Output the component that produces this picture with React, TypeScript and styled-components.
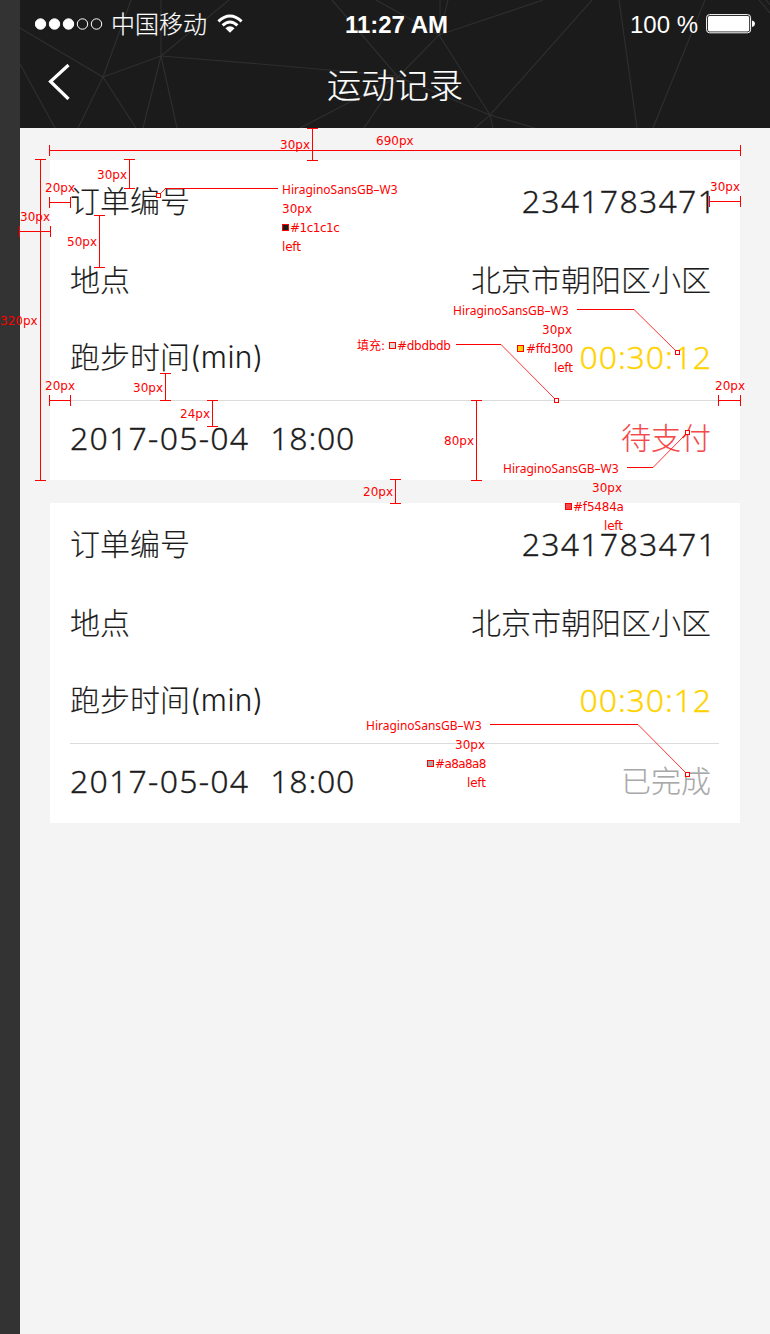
import React from 'react';
import styled, { createGlobalStyle } from 'styled-components';

const GlobalStyle = createGlobalStyle`
  * { box-sizing: border-box; }
  body {
    margin: 0;
    background: #333;
    font-family: "Inter", "Noto Sans CJK SC", sans-serif;
    font-weight: 300;
    color: #1c1c1c;
  }
`;

const Board = styled.div`
  position: relative;
  display: flex;
  width: 770px;
  height: 1334px;
  padding-left: 20px;
  overflow: hidden;
  background: #333;
`;

const Screen = styled.main`
  flex: 1;
  background: #f4f4f4;
`;

const Header = styled.header`
  position: relative;
  height: 128px;
  background: #1b1b1b;
  color: #fff;
`;

const Mesh = styled.svg`
  position: absolute;
  inset: 0;
  fill: none;
  stroke: #2e2e2e;
  stroke-width: 1.2;
`;

const StatusBar = styled.div`
  position: relative;
  display: grid;
  grid-template-columns: 1fr auto 1fr;
  align-items: center;
  height: 48px;
  padding: 0 14px 0 15px;
`;

const StatusSide = styled.div<{ $end?: boolean }>`
  display: flex;
  align-items: center;
  justify-content: ${(p) => (p.$end ? 'flex-end' : 'flex-start')};
`;

const Carrier = styled.span`
  padding-bottom: 2px;
  margin: 0 10px 0 7px;
  font: 300 24px/46px "Noto Sans CJK SC", sans-serif;
  -webkit-text-stroke: 0.15px;
`;

const Clock = styled.span`
  padding: 2px 0 0 2px;
  font: bold 24px/46px "Liberation Sans", Arial, sans-serif;
`;

const BatteryLevel = styled.span`
  padding-top: 2px;
  margin-right: 8px;
  font: 400 24px/46px "Liberation Sans", Arial, sans-serif;
`;

const TitleBar = styled.div`
  position: relative;
  display: grid;
  grid-template-columns: 60px 1fr 60px;
  align-items: center;
  height: 72px;
`;

const BackIcon = styled.svg`
  justify-self: end;
  margin: -4px 10px 0 0;
  fill: none;
  stroke: #fff;
  stroke-width: 3.2;
`;

const Title = styled.h1`
  margin: 0;
  text-align: center;
  font: 300 34px/72px "Noto Sans CJK SC", sans-serif;
  -webkit-text-stroke: 0.2px;
`;

const Orders = styled.section`
  display: flex;
  flex-direction: column;
  gap: 23px;
  padding: 32px 30px 0;
`;

const Card = styled.article`
  display: grid;
  grid-template-rows: 82px 78px 80px 80px;
  height: 320px;
  padding: 0 21px 0 20px;
  background: #fff;
`;

const Row = styled.div<{ $top: number; $line?: boolean }>`
  display: flex;
  justify-content: space-between;
  padding: ${(p) => p.$top}px 8px 0 0;
  border-top: ${(p) => (p.$line ? '1px solid #dbdbdb' : '0')};
  font-size: 30px;
  line-height: 40px;
  white-space: nowrap;
  -webkit-text-stroke: 0.12px;
`;

const Unit = styled.span`
  letter-spacing: 0.4px;
  -webkit-text-stroke: 0;
`;

const Digits = styled.span<{ $color?: string; $spacing: number; $shift?: number }>`
  margin-right: ${(p) => -(p.$shift ?? 0)}px;
  color: ${(p) => p.$color ?? 'inherit'};
  font-family: "Noto Sans", sans-serif;
  font-size: 32px;
  letter-spacing: ${(p) => p.$spacing}px;
  -webkit-text-stroke: 0.3px;
`;

const DateTime = styled.span`
  display: flex;
  gap: 21px;
`;

const Status = styled.span<{ $color: string }>`
  color: ${(p) => p.$color};
`;

const Marks = styled.svg`
  position: absolute;
  inset: 0;
  fill: none;
  stroke: #f00;
  stroke-width: 1;
  pointer-events: none;
`;

const Note = styled.span<{ $x: number; $y: number; $spacing?: number; $name?: boolean }>`
  position: absolute;
  left: ${(p) => p.$x}px;
  top: ${(p) => p.$y - (p.$name ? 7 : 8)}px;
  color: #f00;
  font: 400 12px/16px ${(p) => (p.$name ? '"Noto Sans"' : '"DejaVu Sans"')}, "Noto Sans CJK SC", sans-serif;
  letter-spacing: ${(p) => p.$spacing ?? 0}px;
  white-space: nowrap;
`;

type Measure = { a: number; b: number; at: number; dir: 'h' | 'v' };

const measures: Measure[] = [
  { dir: 'h', a: 49, b: 740, at: 150 },
  { dir: 'v', a: 128, b: 160, at: 312 },
  { dir: 'v', a: 159, b: 188, at: 129 },
  { dir: 'h', a: 49, b: 70, at: 202 },
  { dir: 'h', a: 19, b: 50, at: 231 },
  { dir: 'v', a: 215, b: 267, at: 99 },
  { dir: 'v', a: 159, b: 480, at: 40 },
  { dir: 'h', a: 709, b: 740, at: 201 },
  { dir: 'v', a: 373, b: 400, at: 165 },
  { dir: 'h', a: 49, b: 70, at: 400 },
  { dir: 'v', a: 400, b: 426, at: 212 },
  { dir: 'h', a: 718, b: 740, at: 400 },
  { dir: 'v', a: 400, b: 480, at: 476 },
  { dir: 'v', a: 479, b: 503, at: 395 },
];

const measurePath = ({ a, b, at, dir }: Measure) => {
  const c = at + 0.5;
  return dir === 'h'
    ? `M${a} ${c}H${b + 1}M${a + 0.5} ${at - 5}v11M${b + 0.5} ${at - 5}v11`
    : `M${c} ${a}V${b + 1}M${at - 5} ${a + 0.5}h11M${at - 5} ${b + 0.5}h11`;
};

const leaders = [
  { flat: 'M278 188.5H165', slope: 'M165.5 188.5L160 194', x: 158, y: 195 },
  { flat: 'M577 309.5H634', slope: 'M634 309.5L676 351', x: 677, y: 352 },
  { flat: 'M456 344.5H501', slope: 'M501 344.5L555 399', x: 556, y: 400 },
  { flat: 'M627 467.5H653', slope: 'M653 467.5L686 434', x: 687, y: 432 },
  { flat: 'M490 724.5H638', slope: 'M638 724.5L686 773', x: 687, y: 774 },
];

const swatches = [
  { x: 282, y: 224, color: '#1c1c1c' },
  { x: 517, y: 345, color: '#ffd300' },
  { x: 389, y: 342, color: '#dbdbdb' },
  { x: 565, y: 503, color: '#f5484a' },
  { x: 427, y: 760, color: '#a8a8a8' },
];

const notes: { t: string; x: number; y: number; s?: number; name?: boolean }[] = [
  { t: '30px', x: 280, y: 145 },
  { t: '690px', x: 376, y: 141 },
  { t: '30px', x: 97, y: 175 },
  { t: '20px', x: 45, y: 188 },
  { t: '30px', x: 20, y: 217 },
  { t: '50px', x: 67, y: 242 },
  { t: '320px', x: 0, y: 321 },
  { t: '30px', x: 710, y: 187 },
  { t: '30px', x: 133, y: 388 },
  { t: '20px', x: 45, y: 386 },
  { t: '24px', x: 180, y: 414 },
  { t: '20px', x: 715, y: 386 },
  { t: '80px', x: 444, y: 441 },
  { t: '20px', x: 363, y: 492 },
  { t: 'HiraginoSansGB–W3', x: 282, y: 189, name: true },
  { t: '30px', x: 282, y: 209 },
  { t: '#1c1c1c', x: 290, y: 228, s: -0.5 },
  { t: 'left', x: 282, y: 247, s: -0.2 },
  { t: 'HiraginoSansGB–W3', x: 453, y: 310, name: true },
  { t: '30px', x: 542, y: 330 },
  { t: '#ffd300', x: 526, y: 349, s: -0.3 },
  { t: 'left', x: 554, y: 368, s: -0.2 },
  { t: '填充:', x: 357, y: 346 },
  { t: '#dbdbdb', x: 397, y: 346, s: -0.3 },
  { t: 'HiraginoSansGB–W3', x: 503, y: 468, name: true },
  { t: '30px', x: 592, y: 488 },
  { t: '#f5484a', x: 573, y: 507, s: -0.2 },
  { t: 'left', x: 604, y: 526, s: -0.2 },
  { t: 'HiraginoSansGB–W3', x: 366, y: 725, name: true },
  { t: '30px', x: 455, y: 745 },
  { t: '#a8a8a8', x: 435, y: 764, s: -0.6 },
  { t: 'left', x: 467, y: 783, s: -0.2 },
];

function SignalDots() {
  return (
    <svg width="69" height="12" fill="#fff" stroke="#fff">
      {[6, 20, 34, 48, 62].map((x, i) => (
        <circle key={x} cx={x - 0.5} cy="6" r="5.2" fillOpacity={i < 3 ? 1 : 0} strokeWidth="1" />
      ))}
    </svg>
  );
}

function Wifi() {
  return (
    <svg width="26" height="20" viewBox="0 0 26 20" fill="none" stroke="#fff" strokeWidth="3">
      <path d="M1.4 7.3Q13 -3.3 24.6 7.3M5.6 11.4Q13 4.6 20.4 11.4" />
      <path d="M8.4 14.3Q13 10.2 17.6 14.3L13 18.8Z" fill="#fff" stroke="none" />
    </svg>
  );
}

function Battery() {
  return (
    <svg width="50" height="20" viewBox="0 0 50 20">
      <rect x="0.6" y="0.6" width="44" height="18.2" rx="3" fill="none" stroke="#fff" />
      <rect x="2" y="2" width="41.2" height="15.4" rx="1.6" fill="#fff" />
      <path d="M46 6.4Q49 7.3 49 9.7T46 13Z" fill="#fff" />
    </svg>
  );
}

function OrderCard({ status, color }: { status: string; color: string }) {
  return (
    <Card>
      <Row $top={21}>
        <span>订单编号</span>
        <Digits $spacing={1.25} $shift={6}>2341783471</Digits>
      </Row>
      <Row $top={18}>
        <span>地点</span>
        <span>北京市朝阳区小区</span>
      </Row>
      <Row $top={17}>
        <span>跑步时间<Unit>(min)</Unit></span>
        <Digits $color="#ffd300" $spacing={0.9} $shift={1}>00:30:12</Digits>
      </Row>
      <Row $top={17} $line>
        <DateTime>
          <Digits $spacing={1.25}>2017-05-04</Digits>
          <Digits $spacing={0.8}>18:00</Digits>
        </DateTime>
        <Status $color={color}>{status}</Status>
      </Row>
    </Card>
  );
}

export default function App() {
  return (
    <>
      <GlobalStyle />
      <Board>
        <Screen>
          <Header>
            <Mesh width="750" height="128" viewBox="20 0 750 128">
              <path d="M20 28L103 77L131 0M103 77L161 56M78 128L103 77L136 128M161 56V0M161 56L229 0M143 128L161 56L177 128M161 56L260 64L397 76M20 64L55 128" />
              <path d="M332 0L398 77L439 35L376 0M440 35V0M439 35L448 0M439 35L543 0M439 35L490 115L398 77L300 128M398 77L364 128M475 128L490 115L493 128M490 115L592 0M490 115L535 128" />
              <path d="M619 0L637 128M705 0L653 128M759 0L770 13M766 0L770 5" />
            </Mesh>
            <StatusBar>
              <StatusSide>
                <SignalDots />
                <Carrier>中国移动</Carrier>
                <Wifi />
              </StatusSide>
              <Clock>11:27 AM</Clock>
              <StatusSide $end>
                <BatteryLevel>100 %</BatteryLevel>
                <Battery />
              </StatusSide>
            </StatusBar>
            <TitleBar>
              <BackIcon width="22" height="36" viewBox="0 0 22 36">
                <path d="M20.5 1L2.5 17.5L20.5 35" />
              </BackIcon>
              <Title>运动记录</Title>
            </TitleBar>
          </Header>
          <Orders>
            <OrderCard status="待支付" color="#f5484a" />
            <OrderCard status="已完成" color="#a8a8a8" />
          </Orders>
        </Screen>
        <Marks width="770" height="1334">
          {measures.map((m) => (
            <path key={`${m.dir}${m.a}-${m.at}`} d={measurePath(m)} shapeRendering="crispEdges" />
          ))}
          {leaders.map((l) => (
            <g key={l.flat}>
              <path d={l.flat} />
              <path d={l.slope} strokeWidth="0.8" />
              <rect x={l.x - 1.5} y={l.y - 1.5} width="4" height="4" fill="#fff" />
            </g>
          ))}
          {swatches.map((s) => (
            <rect key={s.color} x={s.x + 0.5} y={s.y + 0.5} width="6" height="6" fill={s.color} />
          ))}
        </Marks>
        {notes.map((n) => (
          <Note key={`${n.x}-${n.y}`} $x={n.x} $y={n.y} $spacing={n.s} $name={n.name}>
            {n.t}
          </Note>
        ))}
      </Board>
    </>
  );
}
